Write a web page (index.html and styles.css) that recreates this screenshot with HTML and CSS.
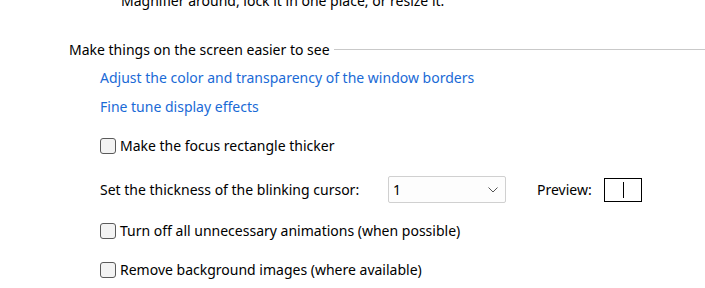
FILE: index.html
```html
<!DOCTYPE html>
<html lang="en">
<head>
    <meta charset="UTF-8">
    <title>Ease of Access</title>
    <link rel="stylesheet" href="styles.css">
</head>
<body>
    <div class="page">
        <p class="intro">Magnifier around, lock it in one place, or resize it.</p>

        <div class="section-head">
            <span>Make things on the screen easier to see</span>
            <div class="rule"></div>
        </div>

        <a class="link" href="#">Adjust the color and transparency of the window borders</a>
        <a class="link" href="#">Fine tune display effects</a>

        <label class="check first">
            <span class="box"></span>
            Make the focus rectangle thicker
        </label>

        <div class="cursor-row">
            <span class="cursor-label">Set the thickness of the blinking cursor:</span>
            <div class="select">
                <span>1</span>
                <svg width="10" height="6" viewBox="0 0 10 6"><path d="M0.5 0.5 L5 5 L9.5 0.5" fill="none" stroke="#555" stroke-width="1"/></svg>
            </div>
            <span class="preview-label">Preview:</span>
            <div class="preview"><div class="caret"></div></div>
        </div>

        <label class="check">
            <span class="box"></span>
            Turn off all unnecessary animations (when possible)
        </label>
        <label class="check">
            <span class="box"></span>
            Remove background images (where available)
        </label>
    </div>
</body>
</html>
```

FILE: styles.css
```css
body {
    margin: 0;
    background: #fff;
    font-family: "Noto Sans", "Open Sans", sans-serif;
    font-size: 14px;
    color: #000;
    overflow: hidden;
}

.page {
    margin-top: -9px;
}

.intro {
    margin: 0 0 0 121px;
    line-height: 20px;
}

.section-head {
    display: flex;
    align-items: center;
    margin: 27px 0 0 69px;
    height: 22px;
}

.section-head .rule {
    flex: 1;
    height: 1px;
    background: #c9c9c9;
    margin-left: 4px;
    margin-top: 1px;
}

.link {
    display: block;
    margin: 7px 0 0 100px;
    line-height: 22px;
    color: #1a6ad6;
    text-decoration: none;
}

.check {
    display: flex;
    align-items: center;
    margin-left: 100px;
    line-height: 22px;
    margin-top: 17px;
}

.box {
    width: 14px;
    height: 14px;
    border: 1px solid #5a5a5a;
    border-radius: 3px;
    background: #f3f3f3;
    margin-right: 4px;
}

.cursor-row {
    display: flex;
    align-items: center;
    margin: 19px 0 0 100px;
    height: 27px;
}

.cursor-label {
    width: 288px;
}

.select {
    height: 25px;
    border: 1px solid #d0d0d0;
    border-radius: 2px;
    background: #fdfdfd;
    display: flex;
    align-items: center;
    justify-content: space-between;
    padding: 0 7px 0 4px;
    width: 105px;
}

.preview-label {
    margin-left: 31px;
    width: 67px;
}

.preview {
    width: 36px;
    height: 22px;
    border: 1px solid #000;
    display: flex;
    justify-content: center;
    align-items: center;
}

.caret {
    width: 1px;
    height: 16px;
    background: #000;
}
```
